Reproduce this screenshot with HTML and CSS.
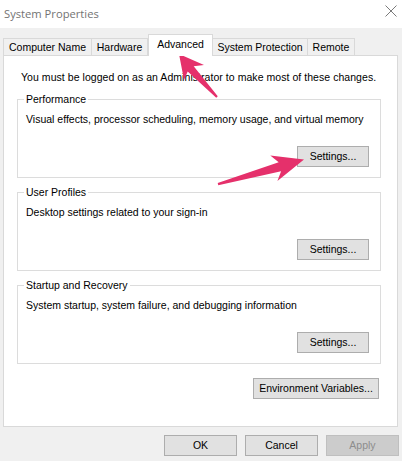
FILE: index.html
```html
<!DOCTYPE html>
<html lang="en">
<head>
<meta charset="utf-8">
<title>System Properties</title>
<link rel="stylesheet" href="styles.css">
</head>
<body>
<div class="window">
  <div class="titlebar">
    <span class="title">System Properties</span>
    <svg class="close" width="12" height="12" viewBox="0 0 12 12"><path d="M0.5 0.5 L11.5 11.5 M11.5 0.5 L0.5 11.5" stroke="#7a7a7a" stroke-width="1" fill="none"/></svg>
  </div>
  <div class="tabs">
    <div class="tab t-cn">Computer Name</div>
    <div class="tab t-hw">Hardware</div>
    <div class="tab t-adv active">Advanced</div>
    <div class="tab t-sp">System Protection</div>
    <div class="tab t-rm">Remote</div>
  </div>
  <div class="panel">
    <p class="note">You must be logged on as an Administrator to make most of these changes.</p>
    <fieldset class="group">
      <legend>Performance</legend>
      <p class="desc">Visual effects, processor scheduling, memory usage, and virtual memory</p>
      <div class="actions"><button class="btn">Settings...</button></div>
    </fieldset>
    <fieldset class="group">
      <legend>User Profiles</legend>
      <p class="desc">Desktop settings related to your sign-in</p>
      <div class="actions"><button class="btn">Settings...</button></div>
    </fieldset>
    <fieldset class="group">
      <legend>Startup and Recovery</legend>
      <p class="desc">System startup, system failure, and debugging information</p>
      <div class="actions"><button class="btn">Settings...</button></div>
    </fieldset>
    <div class="env"><button class="btn btn-env">Environment Variables...</button></div>
  </div>
  <div class="footer">
    <button class="btn btn-foot">OK</button>
    <button class="btn btn-foot">Cancel</button>
    <button class="btn btn-foot" disabled>Apply</button>
  </div>
  <svg class="arrows" width="402" height="461" viewBox="0 0 402 461">
    <polygon fill="#e5306b" points="217.75,96.3 193.7,66.2 204,65 179,54 184,80 187.7,71.5 216.25,97.7"/>
    <polygon fill="#e5306b" points="218.3,185.2 281.1,171.3 277.4,181 304,159.5 270.3,155.6 278.7,162.2 217.7,183"/>
  </svg>
</div>
</body>
</html>
```

FILE: styles.css
```css
html, body {
  margin: 0;
  padding: 0;
}
body {
  width: 402px;
  height: 461px;
  overflow: hidden;
  background: #f0f0f0;
  font-family: "Liberation Sans", Arial, sans-serif;
  font-size: 10.5px;
  color: #000;
}
.window {
  position: relative;
  width: 402px;
  height: 461px;
  background: #f0f0f0;
}
.titlebar {
  height: 28px;
  background: #ffffff;
  display: flex;
  align-items: center;
  justify-content: space-between;
  padding: 0 5px 0 4px;
  box-sizing: border-box;
}
.title {
  font-family: "Open Sans", "Noto Sans", sans-serif;
  font-size: 11.2px;
  color: #737373;
  margin-top: -2px;
}
.close {
  display: block;
  margin-top: -6px;
}
.tabs {
  display: flex;
  align-items: flex-end;
  height: 20px;
  margin-top: 7px;
  padding-left: 3px;
}
.tab {
  box-sizing: border-box;
  height: 17px;
  line-height: 16px;
  border: 1px solid #d9d9d9;
  border-bottom: none;
  background: #f0f0f0;
  text-align: center;
  white-space: nowrap;
  margin-left: -1px;
}
.t-cn { width: 89px; margin-left: 0; }
.t-hw { width: 57px; }
.t-adv { width: 65px; margin-left: 0; }
.t-sp { width: 96px; }
.t-rm { width: 48px; }
.tab.active {
  position: relative;
  z-index: 2;
  height: 22px;
  line-height: 19px;
  margin-bottom: -1px;
  background: #ffffff;
}
.panel {
  box-sizing: border-box;
  width: 395px;
  height: 372px;
  margin-left: 3px;
  background: #ffffff;
  border: 1px solid #d9d9d9;
  padding: 14px 16px 0 13px;
}
.note {
  margin: 0;
  padding-left: 4px;
  line-height: 14px;
  white-space: nowrap;
  letter-spacing: 0.05px;
}
.group {
  margin: 8px 0 0 0;
  padding: 0 11px 10px 8px;
  border: 1px solid #dcdcdc;
  min-width: 0;
}
.group + .group {
  margin-top: 7px;
}
.group legend {
  padding: 0 2px;
  margin-left: -2px;
  line-height: 14px;
}
.desc {
  margin: 6px 0 0 0;
  line-height: 14px;
  white-space: nowrap;
}
.actions {
  display: flex;
  justify-content: flex-end;
  margin-top: 20px;
}
.btn {
  box-sizing: border-box;
  width: 72px;
  height: 21px;
  padding: 0;
  margin: 0;
  background: #e1e1e1;
  border: 1px solid #adadad;
  font-family: "Liberation Sans", Arial, sans-serif;
  font-size: 10.5px;
  color: #000;
  line-height: 19px;
  text-align: center;
}
.env {
  display: flex;
  justify-content: flex-end;
  margin-top: 14px;
  padding-right: 2px;
}
.btn-env {
  width: 126px;
}
.footer {
  display: flex;
  justify-content: flex-end;
  gap: 8px;
  padding: 8px 3px 0 0;
}
.btn-foot {
  width: 73px;
}
.btn:disabled {
  background: #cccccc;
  border-color: #bfbfbf;
  color: #8d8d8d;
}
.arrows {
  position: absolute;
  left: 0;
  top: 0;
  pointer-events: none;
}
```
